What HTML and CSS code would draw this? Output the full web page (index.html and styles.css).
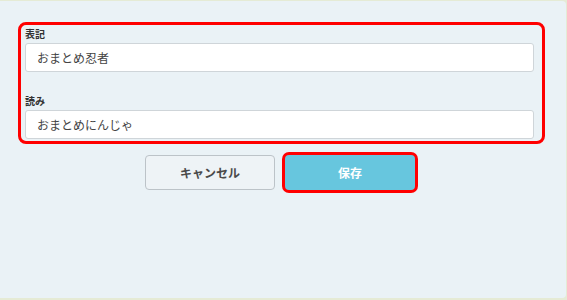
FILE: index.html
```html
<!DOCTYPE html>
<html lang="ja">
<head>
<meta charset="utf-8">
<link rel="stylesheet" href="styles.css">
</head>
<body>
<div class="panel">
  <div class="form-box">
    <div class="field">
      <div class="label">表記</div>
      <div class="input">おまとめ忍者</div>
    </div>
    <div class="field second">
      <div class="label">読み</div>
      <div class="input">おまとめにんじゃ</div>
    </div>
  </div>
  <div class="actions">
    <div class="btn cancel">キャンセル</div>
    <div class="btn save">保存</div>
  </div>
</div>
</body>
</html>
```
FILE: styles.css
```css
html, body {
  margin: 0;
  padding: 0;
}
body {
  width: 567px;
  height: 300px;
  background: #e5ebd5;
  font-family: "Noto Sans CJK JP", "Noto Sans", sans-serif;
  overflow: hidden;
}
.panel {
  box-sizing: border-box;
  margin: 1px 1px 0 0;
  height: 297px;
  background: #eaf2f6;
  border-radius: 0 4px 4px 0;
  padding: 21px 21px 0 18px;
}
.form-box {
  border: 3px solid #ff0000;
  border-radius: 8px;
  padding: 2px 8px 2px 4px;
}
.field.second {
  margin-top: 22px;
}
.label {
  font-size: 10px;
  font-weight: 700;
  line-height: 14px;
  color: #333;
  margin-bottom: 2px;
}
.input {
  box-sizing: border-box;
  height: 29px;
  background: #fff;
  border: 1px solid #cfd5d9;
  border-radius: 3px;
  padding-left: 11px;
  font-size: 12px;
  line-height: 27px;
  color: #444;
}
.actions {
  display: flex;
  justify-content: center;
  gap: 10px;
  margin-top: 11px;
  padding-right: 3px;
}
.btn {
  box-sizing: border-box;
  width: 130px;
  height: 35px;
  border-radius: 4px;
  font-size: 12px;
  font-weight: 700;
  display: flex;
  align-items: center;
  justify-content: center;
}
.cancel {
  background: #eef3f6;
  border: 1px solid #bcc3c8;
  color: #4a4a4a;
}
.save {
  background: #67c6de;
  color: #fff;
  box-shadow: 0 0 0 3px #ff0000;
}
```
